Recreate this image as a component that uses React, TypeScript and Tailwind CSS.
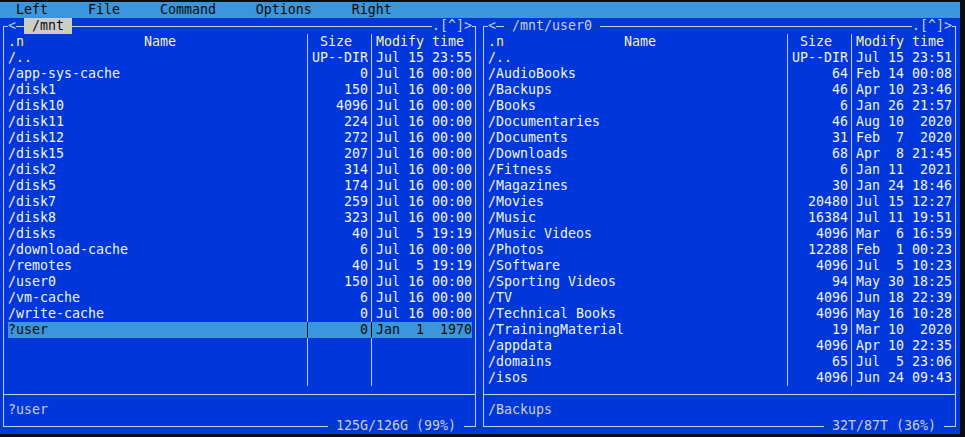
import React from 'react';

type Entry = { name: string; size: string; time: string };

const leftFiles: Entry[] = [
  { name: '/..', size: 'UP--DIR', time: 'Jul 15 23:55' },
  { name: '/app-sys-cache', size: '0', time: 'Jul 16 00:00' },
  { name: '/disk1', size: '150', time: 'Jul 16 00:00' },
  { name: '/disk10', size: '4096', time: 'Jul 16 00:00' },
  { name: '/disk11', size: '224', time: 'Jul 16 00:00' },
  { name: '/disk12', size: '272', time: 'Jul 16 00:00' },
  { name: '/disk15', size: '207', time: 'Jul 16 00:00' },
  { name: '/disk2', size: '314', time: 'Jul 16 00:00' },
  { name: '/disk5', size: '174', time: 'Jul 16 00:00' },
  { name: '/disk7', size: '259', time: 'Jul 16 00:00' },
  { name: '/disk8', size: '323', time: 'Jul 16 00:00' },
  { name: '/disks', size: '40', time: 'Jul  5 19:19' },
  { name: '/download-cache', size: '6', time: 'Jul 16 00:00' },
  { name: '/remotes', size: '40', time: 'Jul  5 19:19' },
  { name: '/user0', size: '150', time: 'Jul 16 00:00' },
  { name: '/vm-cache', size: '6', time: 'Jul 16 00:00' },
  { name: '/write-cache', size: '0', time: 'Jul 16 00:00' },
  { name: '?user', size: '0', time: 'Jan  1  1970' },
];

const rightFiles: Entry[] = [
  { name: '/..', size: 'UP--DIR', time: 'Jul 15 23:51' },
  { name: '/AudioBooks', size: '64', time: 'Feb 14 00:08' },
  { name: '/Backups', size: '46', time: 'Apr 10 23:46' },
  { name: '/Books', size: '6', time: 'Jan 26 21:57' },
  { name: '/Documentaries', size: '46', time: 'Aug 10  2020' },
  { name: '/Documents', size: '31', time: 'Feb  7  2020' },
  { name: '/Downloads', size: '68', time: 'Apr  8 21:45' },
  { name: '/Fitness', size: '6', time: 'Jan 11  2021' },
  { name: '/Magazines', size: '30', time: 'Jan 24 18:46' },
  { name: '/Movies', size: '20480', time: 'Jul 15 12:27' },
  { name: '/Music', size: '16384', time: 'Jul 11 19:51' },
  { name: '/Music Videos', size: '4096', time: 'Mar  6 16:59' },
  { name: '/Photos', size: '12288', time: 'Feb  1 00:23' },
  { name: '/Software', size: '4096', time: 'Jul  5 10:23' },
  { name: '/Sporting Videos', size: '94', time: 'May 30 18:25' },
  { name: '/TV', size: '4096', time: 'Jun 18 22:39' },
  { name: '/Technical Books', size: '4096', time: 'May 16 10:28' },
  { name: '/TrainingMaterial', size: '19', time: 'Mar 10  2020' },
  { name: '/appdata', size: '4096', time: 'Apr 10 22:35' },
  { name: '/domains', size: '65', time: 'Jul  5 23:06' },
  { name: '/isos', size: '4096', time: 'Jun 24 09:43' },
];

const Sep: React.FC<{ dark?: boolean }> = ({ dark }) => (
  <div className="w-[8px] h-full flex">
    <div className={`ml-[3px] w-px h-full ${dark ? 'bg-[#0c0c0c]' : 'bg-[#cccccc]'}`} />
  </div>
);

const Row: React.FC<{ entry?: Entry; selected?: boolean; header?: boolean }> = ({ entry, selected, header }) => {
  const text = header ? 'text-[#f9f1a5]' : selected ? 'text-[#0c0c0c]' : 'text-[#f2f2f2]';
  return (
    <div className={`flex h-4 w-[464px] ${selected ? 'bg-[#3a96dd]' : ''} ${text}`}>
      {header ? (
        <div className="w-[296px] whitespace-pre">{'.n               Name'}</div>
      ) : (
        <div className="w-[296px] whitespace-pre overflow-hidden">{entry?.name ?? ''}</div>
      )}
      <Sep dark={selected} />
      <div className={`w-[56px] whitespace-pre ${header ? 'text-left' : 'text-right'}`}>
        {header ? ' Size' : entry?.size ?? ''}
      </div>
      <Sep dark={selected} />
      <div className="w-[96px] whitespace-pre">{header ? 'Modify time' : entry?.time ?? ''}</div>
    </div>
  );
};

const Panel: React.FC<{
  title: string;
  active?: boolean;
  files: Entry[];
  selectedIndex?: number;
  status: string;
  usage: string;
}> = ({ title, active, files, selectedIndex, status, usage }) => {
  const rows: (Entry | undefined)[] = [];
  for (let i = 0; i < 21; i++) rows.push(files[i]);

  return (
    <div className="w-[480px] flex flex-col">
      {/* top border with title */}
      <div className="flex h-4 text-[#cccccc]">
        <div className="ml-[3px] w-[5px] h-[8px] mt-[8px] border-l border-t border-[#cccccc]" />
        <div className="w-[8px]">&lt;</div>
        <div className="w-[8px] h-px mt-[8px] bg-[#cccccc]" />
        <div className={`whitespace-pre ${active ? 'bg-[#cccccc] text-[#0c0c0c]' : ''}`}>{` ${title} `}</div>
        <div className="flex-1 h-px mt-[8px] bg-[#cccccc]" />
        <div className="w-[40px]">.[^]&gt;</div>
        <div className="w-[4px] h-[8px] mt-[8px] border-r border-t border-[#cccccc]" />
        <div className="w-[4px]" />
      </div>

      {/* body */}
      <div className="ml-[3px] mr-[4px] border-l border-r border-[#cccccc] flex flex-col">
        <div className="pl-[4px] flex flex-col">
          <Row header />
          {rows.map((r, i) => (
            <Row key={i} entry={r} selected={i === selectedIndex} />
          ))}
        </div>
        <div className="h-4">
          <div className="h-px mt-[8px] bg-[#cccccc]" />
        </div>
        <div className="h-4 pl-[4px] text-[#cccccc] whitespace-pre">{status}</div>
      </div>

      {/* bottom border with usage */}
      <div className="flex h-4 text-[#cccccc]">
        <div className="ml-[3px] w-[5px] h-[9px] border-l border-b border-[#cccccc]" />
        <div className="flex-1 h-px mt-[8px] bg-[#cccccc]" />
        <div className="whitespace-pre">{` ${usage} `}</div>
        <div className="w-[8px] h-px mt-[8px] bg-[#cccccc]" />
        <div className="w-[4px] h-[9px] border-r border-b border-[#cccccc]" />
        <div className="w-[4px]" />
      </div>
    </div>
  );
};

export default function App() {
  return (
    <div
      className="w-[965px] h-[437px] bg-[#0c0c0c] pt-[2px] overflow-hidden text-[13.29px] leading-4"
      style={{ fontFamily: '"DejaVu Sans Mono", "Liberation Mono", monospace' }}
    >
      <div className="w-[960px] flex flex-col">
        <div className="h-4 bg-[#3a96dd] text-[#0c0c0c] whitespace-pre">
          {'  Left     File     Command     Options     Right'}
        </div>
        <div className="flex bg-[#0037da]">
          <Panel
            title="/mnt"
            active
            files={leftFiles}
            selectedIndex={17}
            status="?user"
            usage="125G/126G (99%)"
          />
          <Panel
            title="/mnt/user0"
            files={rightFiles}
            status="/Backups"
            usage="32T/87T (36%)"
          />
        </div>
      </div>
    </div>
  );
}
